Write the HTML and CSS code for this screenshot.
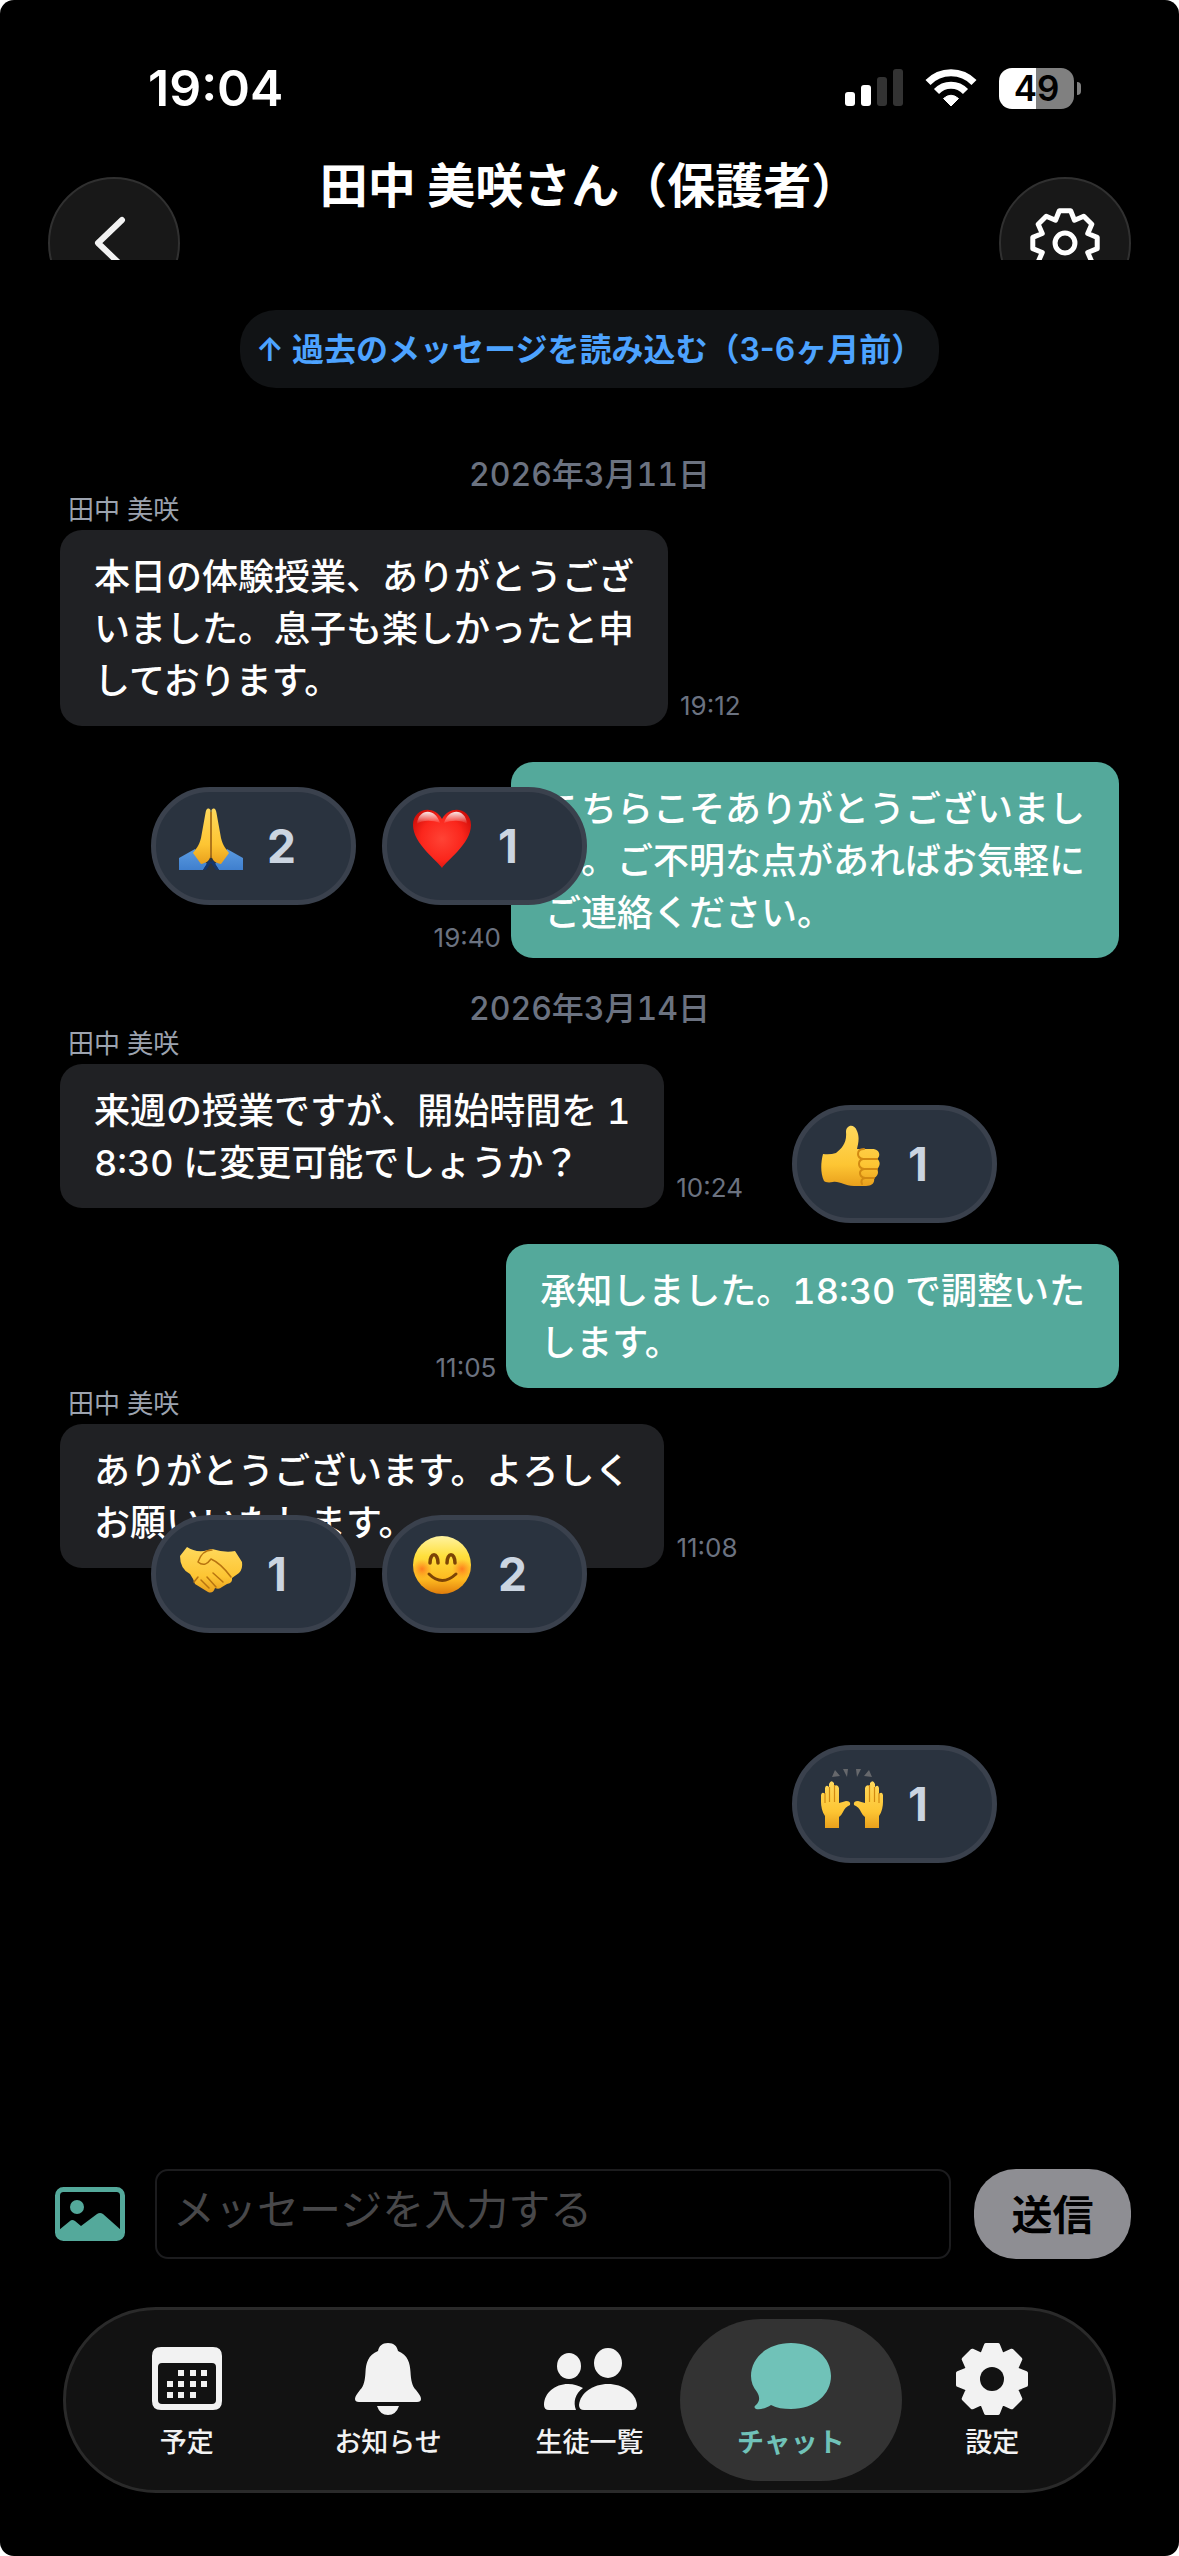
FILE: index.html
```html
<!DOCTYPE html>
<html lang="ja">

<head>
  <meta charset="UTF-8" />
  <meta name="viewport" content="width=device-width, initial-scale=1.0" />
  <title>チャット</title>
  <link rel="stylesheet" href="styles.css">
</head>

<body>
  <!-- Shared shapes -->
  <svg class="defs" width="0" height="0" aria-hidden="true">
    <defs>
      <path id="gear" d="M-6-34L6-34 10-24 19.8-28.3 28.3-19.8 24-10 34-6 34 6 24 10 28.3 19.8 19.8 28.3 10 24 6 34-6 34-10 24-19.8 28.3-28.3 19.8-24 10-34 6-34-6-24-10-28.3-19.8-19.8-28.3-10-24z" />
      <linearGradient id="skin" x1="0" y1="0" x2="0" y2="1">
        <stop offset="0" stop-color="#ffd95c" />
        <stop offset="0.65" stop-color="#fdc533" />
        <stop offset="1" stop-color="#e9a01c" />
      </linearGradient>
      <linearGradient id="sleeve" x1="0" y1="0" x2="0" y2="1">
        <stop offset="0" stop-color="#5b9be0" />
        <stop offset="1" stop-color="#3f7fce" />
      </linearGradient>
      <radialGradient id="heart" cx="0.5" cy="0.5" r="0.6">
        <stop offset="0" stop-color="#ff4335" />
        <stop offset="0.6" stop-color="#fb261c" />
        <stop offset="1" stop-color="#cf0d08" />
      </radialGradient>
      <linearGradient id="gloss" x1="0" y1="0" x2="0" y2="1">
        <stop offset="0" stop-color="#fff" stop-opacity="0.9" />
        <stop offset="1" stop-color="#fff" stop-opacity="0" />
      </linearGradient>
      <linearGradient id="face" x1="0" y1="0" x2="0" y2="1">
        <stop offset="0" stop-color="#fff3a0" />
        <stop offset="0.35" stop-color="#ffdf3c" />
        <stop offset="0.75" stop-color="#fdb820" />
        <stop offset="1" stop-color="#e07d0c" />
      </linearGradient>
      <radialGradient id="blush">
        <stop offset="0" stop-color="#ff6a1a" stop-opacity="0.8" />
        <stop offset="1" stop-color="#ff8a1a" stop-opacity="0" />
      </radialGradient>
    </defs>
  </svg>

  <div class="phone">
    <div class="status-bar">
      <span class="clock">19:04</span>
      <div class="status-icons">
        <svg width="58" height="38" viewBox="0 0 58 38" aria-hidden="true">
          <rect x="0" y="23" width="10" height="14" rx="3" fill="#fff" />
          <rect x="16" y="16" width="10" height="21" rx="3" fill="#fff" />
          <rect x="32" y="8" width="10" height="29" rx="3" fill="#333" />
          <rect x="48" y="0" width="10" height="37" rx="3" fill="#333" />
        </svg>
        <svg width="52" height="38" viewBox="0 0 52 38" aria-hidden="true">
          <g fill="none" stroke="#fff" stroke-width="7">
            <path d="M3 13.500A32 32 0 0 1 49 13.500" />
            <path d="M11.500 22.500A20 20 0 0 1 40.500 22.500" />
          </g>
          <path d="M26 37L18.500 29.500Q26 23 33.500 29.500z" fill="#fff" stroke="#fff" stroke-width="1" />
        </svg>
        <div class="battery"><span class="battery-level">49</span></div>
      </div>
    </div>

    <header class="header">
      <button class="round-btn" type="button" aria-label="戻る">
        <svg width="68" height="68" viewBox="-34 -34 68 68">
          <path d="M24-23L0 0 24 23" transform="translate(-16 0)" fill="none" stroke="#f2f2f2" stroke-width="6" stroke-linecap="round" stroke-linejoin="round" />
        </svg>
      </button>
      <h1 class="title">田中 美咲さん（保護者）</h1>
      <button class="round-btn" type="button" aria-label="チャット設定">
        <svg width="72" height="72" viewBox="-38 -38 76 76">
          <g fill="none" stroke="#fff" stroke-width="5.300" stroke-linejoin="round">
            <use href="#gear" />
            <circle r="10.500" />
          </g>
        </svg>
      </button>
    </header>

    <main class="chat">
      <button class="load-more" type="button">↑ 過去のメッセージを読み込む（3-6ヶ月前）</button>

      <p class="date">2026年3月11日</p>

      <div class="message theirs">
        <p class="sender">田中 美咲</p>
        <div class="row">
          <p class="bubble">本日の体験授業、ありがとうござ<br>いました。息子も楽しかったと申<br>しております。</p>
          <time class="time">19:12</time>
        </div>
        <div class="reactions first">
          <button class="reaction" type="button">
            <svg class="emoji" viewBox="0 0 64 64" role="img" aria-label="合掌">
              <path d="M0 52L16 43 28 58 24 64H0zM64 52L48 43 36 58 40 64H64z" fill="url(#sleeve)" />
              <path d="M24 64L30 54 32 56 34 54 40 64H37L32 57 27 64z" fill="#15356b" />
              <path d="M31.500 4C29 1 27 3 26.500 7L22 32C20 40 17 43 14 47L22 58C28 57 31.500 54 31.500 48z" fill="url(#skin)" />
              <path d="M32.500 4C35 1 37 3 37.500 7L42 32C44 40 47 43 50 47L42 58C36 57 32.500 54 32.500 48z" fill="url(#skin)" />
              <path d="M32 6V52" stroke="#b87410" stroke-width="1.500" />
            </svg>
            <span>2</span>
          </button>
          <button class="reaction" type="button">
            <svg class="emoji" viewBox="0 0 64 64" role="img" aria-label="ハート">
              <path d="M32 62C28 55 3 38 3 19 3 2 24-2 32 13 40-2 61 2 61 19 61 38 36 55 32 62z" fill="url(#heart)" />
              <path d="M7 18C8 3 25 1 30 17 22 14 12 14 7 18zM57 18C56 3 39 1 34 17 42 14 52 14 57 18z" fill="url(#gloss)" />
            </svg>
            <span>1</span>
          </button>
        </div>
      </div>

      <div class="message mine">
        <div class="row">
          <time class="time">19:40</time>
          <p class="bubble">こちらこそありがとうございまし<br>た。ご不明な点があればお気軽に<br>ご連絡ください。</p>
        </div>
        <div class="reactions second">
          <button class="reaction" type="button">
            <svg class="emoji" viewBox="0 0 64 64" role="img" aria-label="いいね">
              <path d="M3 30Q10 31 16 29C22 24 27 19 26 8 26 1 34-1 37 7 40 14 38 20 37 25H52C60 25 61 32 57 35 61 37 60 43 57 45 59 48 58 52 54 54 55 59 52 62 46 62H34C24 62 20 57 13 58 8 59 5 58 4 57 0 48 1 38 3 30z" fill="url(#skin)" />
              <path d="M57 35H43Q38 34 38 30 38 25 44 25M57 45H44Q39 44 39 40 39 36 43 35M54 54H45Q40 53 40 49 40 46 44 45M45 54Q40 55 42 60" fill="none" stroke="#d28a12" stroke-width="2" stroke-linecap="round" />
            </svg>
            <span>1</span>
          </button>
        </div>
      </div>

      <p class="date">2026年3月14日</p>

      <div class="message theirs">
        <p class="sender">田中 美咲</p>
        <div class="row">
          <p class="bubble">来週の授業ですが、開始時間を 1<br>8:30 に変更可能でしょうか？</p>
          <time class="time">10:24</time>
        </div>
        <div class="reactions third">
          <button class="reaction" type="button">
            <svg class="emoji" viewBox="0 0 64 64" role="img" aria-label="握手">
              <g transform="translate(0 4)">
                <path d="M1 18L8 9Q15 14 25 13L33 11Q46 15 56 13L63 24Q64 31 60 35L53 40Q54 45 48 46L43 49Q40 52 36 50 34 56 29 54L16 46Q14 40 11 36 1 31 1 18z" fill="url(#skin)" />
                <path d="M33 12C25 12 21 18 19 24 25 29 29 25 32 21 39 24 46 31 52 39M34 35L44 44M28 39L37 49M22 42L30 50M19 39L15 44" fill="none" stroke="#b87410" stroke-width="1.500" stroke-linecap="round" stroke-linejoin="round" />
              </g>
            </svg>
            <span>1</span>
          </button>
          <button class="reaction" type="button">
            <svg class="emoji" viewBox="0 0 64 64" role="img" aria-label="笑顔">
              <circle cx="32" cy="31" r="29" fill="url(#face)" />
              <circle cx="12" cy="35" r="10" fill="url(#blush)" />
              <circle cx="52" cy="35" r="10" fill="url(#blush)" />
              <path d="M20 29C20 18 28 18 28 29M37 29C37 18 45 18 45 29" fill="none" stroke="#7c4406" stroke-width="3.500" stroke-linecap="round" />
              <path d="M19 40Q32 53 46 40" fill="none" stroke="#7c4406" stroke-width="3" stroke-linecap="round" />
            </svg>
            <span>2</span>
          </button>
        </div>
      </div>

      <div class="message mine">
        <div class="row">
          <time class="time">11:05</time>
          <p class="bubble">承知しました。18:30 で調整いた<br>します。</p>
        </div>
        <div class="reactions fourth">
          <button class="reaction" type="button">
            <svg class="emoji" viewBox="0 0 64 64" role="img" aria-label="万歳">
              <g transform="translate(0 3)">
                <path d="M12 10L15 3 20 9zM23 2H28L27 10zM41 2H36L37 10zM52 10L49 3 44 9z" fill="#66686c" />
                <g fill="url(#skin)">
                  <path id="palm" d="M5 61V49C2 45 1 39 1 35V28Q2 24 5 27V21Q6 17 9 20V17Q11 12 14 16V19Q18 17 19 21V36Q23 35 26 34 31 34 30 38 25 40 23 45 21 49 19 50V61z" />
                  <use href="#palm" transform="matrix(-1 0 0 1 64 0)" />
                </g>
                <g fill="none" stroke="#d28a12" stroke-width="1.200">
                  <path id="fingers" d="M5 26V36M9.500 20V35M14.500 18V35" />
                  <use href="#fingers" transform="matrix(-1 0 0 1 64 0)" />
                </g>
              </g>
            </svg>
            <span>1</span>
          </button>
        </div>
      </div>

      <div class="message theirs">
        <p class="sender">田中 美咲</p>
        <div class="row">
          <p class="bubble">ありがとうございます。よろしく<br>お願いいたします。</p>
          <time class="time">11:08</time>
        </div>
      </div>
    </main>

    <form class="composer">
      <button class="image-btn" type="button" aria-label="画像を選択">
        <svg width="70" height="56" viewBox="0 0 70 56">
          <rect x="2.500" y="3.500" width="65" height="49" rx="6" fill="none" stroke="#54a99b" stroke-width="5" />
          <circle cx="22" cy="21" r="7" fill="#54a99b" />
          <path d="M4 44L15 35Q17 33 20 35L26 40 42 28Q45 26 48 28L66 44V53H4z" fill="#54a99b" />
        </svg>
      </button>
      <input class="message-input" type="text" placeholder="メッセージを入力する" aria-label="メッセージ" />
      <button class="send-btn" type="submit">送信</button>
    </form>

    <nav class="tab-bar">
      <a class="tab" href="#schedule">
        <svg width="84" height="76" viewBox="-42 -38 84 76" aria-hidden="true">
          <path fill-rule="evenodd" d="M-26-32H26Q35-32 35-23V22Q35 31 26 31H-26Q-35 31-35 22V-23Q-35-32-26-32zM-25-16Q-29-16-29-12V21Q-29 25-25 25H25Q29 25 29 21V-12Q29-16 25-16z" />
          <path d="M-9-9h6v6h-6zM3-9h6v6h-6zM14-9h6v6h-6zM-20 2h6v6h-6zM-9 2h6v6h-6zM3 2h6v6h-6zM14 2h6v6h-6zM-20 13h6v6h-6zM-9 13h6v6h-6zM3 13h6v6h-6z" />
        </svg>
        <span>予定</span>
      </a>
      <a class="tab" href="#notices">
        <svg width="84" height="76" viewBox="-42 -38 84 76" aria-hidden="true">
          <path d="M0-36C6-36 9-33 10-28 20-24 22-16 22.500-7 23 1 24 7 28 11 31 15 33 17 33 20Q33 23 29 23H-29Q-33 23-33 20C-33 17-31 15-28 11-24 7-23 1-22.500-7-22-16-20-24-10-28-9-33-6-36 0-36zM-11 27H11Q8 36 0 36T-11 27z" />
        </svg>
        <span>お知らせ</span>
      </a>
      <a class="tab" href="#students">
        <svg width="96" height="76" viewBox="-48 -38 96 76" aria-hidden="true">
          <ellipse cx="-21" cy="-13" rx="12" ry="13" />
          <path d="M-41 31Q-46 31-46 26C-46 14-35 5-22 5-16 5-11 7-7 9-15 15-17 23-14 31z" />
          <ellipse cx="18" cy="-16" rx="14" ry="15" />
          <path d="M-6 31Q-11 31-11 26C-10 14 3 5 18 5 33 5 46 14 47 26Q47 31 42 31z" />
        </svg>
        <span>生徒一覧</span>
      </a>
      <a class="tab active" href="#chat" aria-current="page">
        <svg width="84" height="76" viewBox="-42 -38 84 76" aria-hidden="true">
          <path d="M0-36C24-36 40-21 40-3S24 30 0 30C-8 30-14 29-20 26-24 29-31 31-35 30-37 29-37 27-35 26-31 22-31 18-34 13-38 8-40 3-40-3-40-21-24-36 0-36z" />
        </svg>
        <span>チャット</span>
      </a>
      <a class="tab" href="#settings">
        <svg width="84" height="76" viewBox="-42 -38 84 76" aria-hidden="true">
          <use href="#gear" stroke="currentColor" stroke-width="4" stroke-linejoin="round" />
          <circle r="12" fill="#121212" />
        </svg>
        <span>設定</span>
      </a>
    </nav>
  </div>
</body>

</html>
```
FILE: styles.css
```css
:root {
  --accent: #54a99b;
  --accent-light: #70c2b8;
  --bubble-bg: #202124;
  --muted: #6b7280;
  --bar-bg: #121212;
}

* {
  margin: 0;
  padding: 0;
  box-sizing: border-box;
}

body {
  background-color: #fff;
  font-family: Inter, "Noto Sans CJK JP", sans-serif;
  color: #fff;
}

button,
input {
  font-family: inherit;
  border: none;
}

button {
  cursor: pointer;
}

.defs {
  position: absolute;
}

.phone {
  display: flex;
  flex-direction: column;
  min-height: 100vh;
  background-color: #000;
  border-radius: 14px;
  overflow: hidden;
}

/* Status bar */
.status-bar {
  display: flex;
  justify-content: space-between;
  align-items: center;
  height: 140px;
  padding: 36px 105px 0 148px;
}

.clock {
  font-size: 50px;
  line-height: 60px;
  font-weight: 600;
}

.status-icons {
  display: flex;
  align-items: center;
  gap: 22px;
}

.battery {
  position: relative;
  width: 75px;
  height: 41px;
  border-radius: 13px;
  background: linear-gradient(to right, #fff 49%, #808080 49%);
  color: #000;
  text-align: center;
}

.battery::after {
  content: "";
  position: absolute;
  left: 78px;
  top: 14px;
  width: 4px;
  height: 13px;
  border-radius: 0 4px 4px 0;
  background-color: #808080;
}

.battery-level {
  font-size: 35px;
  line-height: 41px;
  font-weight: 600;
}

/* Header */
.header {
  display: flex;
  justify-content: space-between;
  align-items: flex-start;
  height: 120px;
  padding: 14px 48px 0;
  overflow: hidden;
}

.title {
  font-size: 48px;
  line-height: 64px;
  font-weight: 700;
}

.round-btn {
  display: flex;
  justify-content: center;
  align-items: center;
  flex-shrink: 0;
  width: 132px;
  height: 132px;
  margin-top: 23px;
  border: 2px solid #303030;
  border-radius: 50%;
  background-color: #181818;
}

/* Chat */
.chat {
  flex: 1;
  display: flex;
  flex-direction: column;
  padding: 50px 60px 0;
}

.load-more {
  align-self: center;
  height: 78px;
  padding: 0 16px 4px;
  border-radius: 36px;
  background-color: #111315;
  color: #4da3ff;
  font-size: 32px;
  font-weight: 600;
}

.date {
  height: 40px;
  margin-top: 30px;
  color: var(--muted);
  font-size: 32px;
  line-height: 42px;
  font-weight: 500;
  font-variant-numeric: tabular-nums;
  text-align: center;
}

.load-more + .date {
  margin-top: 66px;
}

.message {
  position: relative;
}

.mine {
  padding-top: 36px;
}

.sender {
  height: 36px;
  padding-left: 8px;
  color: #9ca3af;
  font-size: 26px;
  line-height: 32px;
}

.row {
  display: flex;
  align-items: flex-end;
  gap: 12px;
}

.mine .row {
  justify-content: flex-end;
  gap: 10px;
}

.bubble {
  padding: 21px 34px 19px;
  border-radius: 22px;
  background-color: var(--bubble-bg);
  font-size: 36px;
  line-height: 52px;
  font-weight: 500;
  font-variant-numeric: tabular-nums;
  white-space: nowrap;
}

.mine .bubble {
  background-color: var(--accent);
}

.time {
  padding-bottom: 4px;
  color: var(--muted);
  font-size: 26px;
  line-height: 32px;
}

/* Reactions float over the thread */
.reactions {
  position: absolute;
  z-index: 1;
  display: flex;
  gap: 26px;
}

.theirs .reactions {
  left: 91px;
}

.mine .reactions {
  right: 122px;
}

.reactions.first {
  top: calc(100% + 61px);
}

.reactions.second {
  top: calc(100% + 147px);
}

.reactions.third {
  top: calc(100% + 307px);
}

.reactions.fourth {
  top: calc(100% + 357px);
}

.reaction {
  display: flex;
  align-items: center;
  gap: 24px;
  width: 205px;
  height: 118px;
  padding-left: 23px;
  border: 5px solid #3a414d;
  border-radius: 59px;
  background-color: #2a333f;
  color: #cbd5e1;
  font-size: 46px;
  font-weight: 700;
}

.emoji {
  width: 64px;
  height: 64px;
  margin-bottom: 16px;
}

/* Composer */
.composer {
  display: flex;
  align-items: center;
  padding: 0 48px 48px 55px;
}

.image-btn {
  display: flex;
  background: none;
}

.message-input {
  flex: 1;
  min-width: 0;
  height: 90px;
  margin: 0 23px 0 30px;
  padding: 0 16px 10px;
  border: 2px solid #1c1c1e;
  border-radius: 13px;
  background-color: #000;
  color: #fff;
  font-size: 42px;
}

.message-input::placeholder {
  color: #48484a;
}

.send-btn {
  width: 157px;
  height: 90px;
  padding-bottom: 4px;
  border-radius: 42px;
  background-color: #8e8e93;
  color: #000;
  font-size: 41px;
  font-weight: 600;
}

/* Tab bar */
.tab-bar {
  display: flex;
  margin: 0 63px 63px;
  padding: 9px 10px;
  border: 3px solid #2a2a2a;
  border-radius: 93px;
  background-color: var(--bar-bg);
}

.tab {
  display: flex;
  flex: 1;
  flex-direction: column;
  align-items: center;
  gap: 8px;
  height: 162px;
  padding-top: 22px;
  border-radius: 81px;
  color: #f2f2f2;
  fill: currentColor;
  font-size: 27px;
  line-height: 36px;
  font-weight: 500;
  text-decoration: none;
}

.tab + .tab {
  margin-left: -20px;
}

.tab.active {
  background-color: #333;
  color: var(--accent-light);
  font-weight: 700;
}
```
